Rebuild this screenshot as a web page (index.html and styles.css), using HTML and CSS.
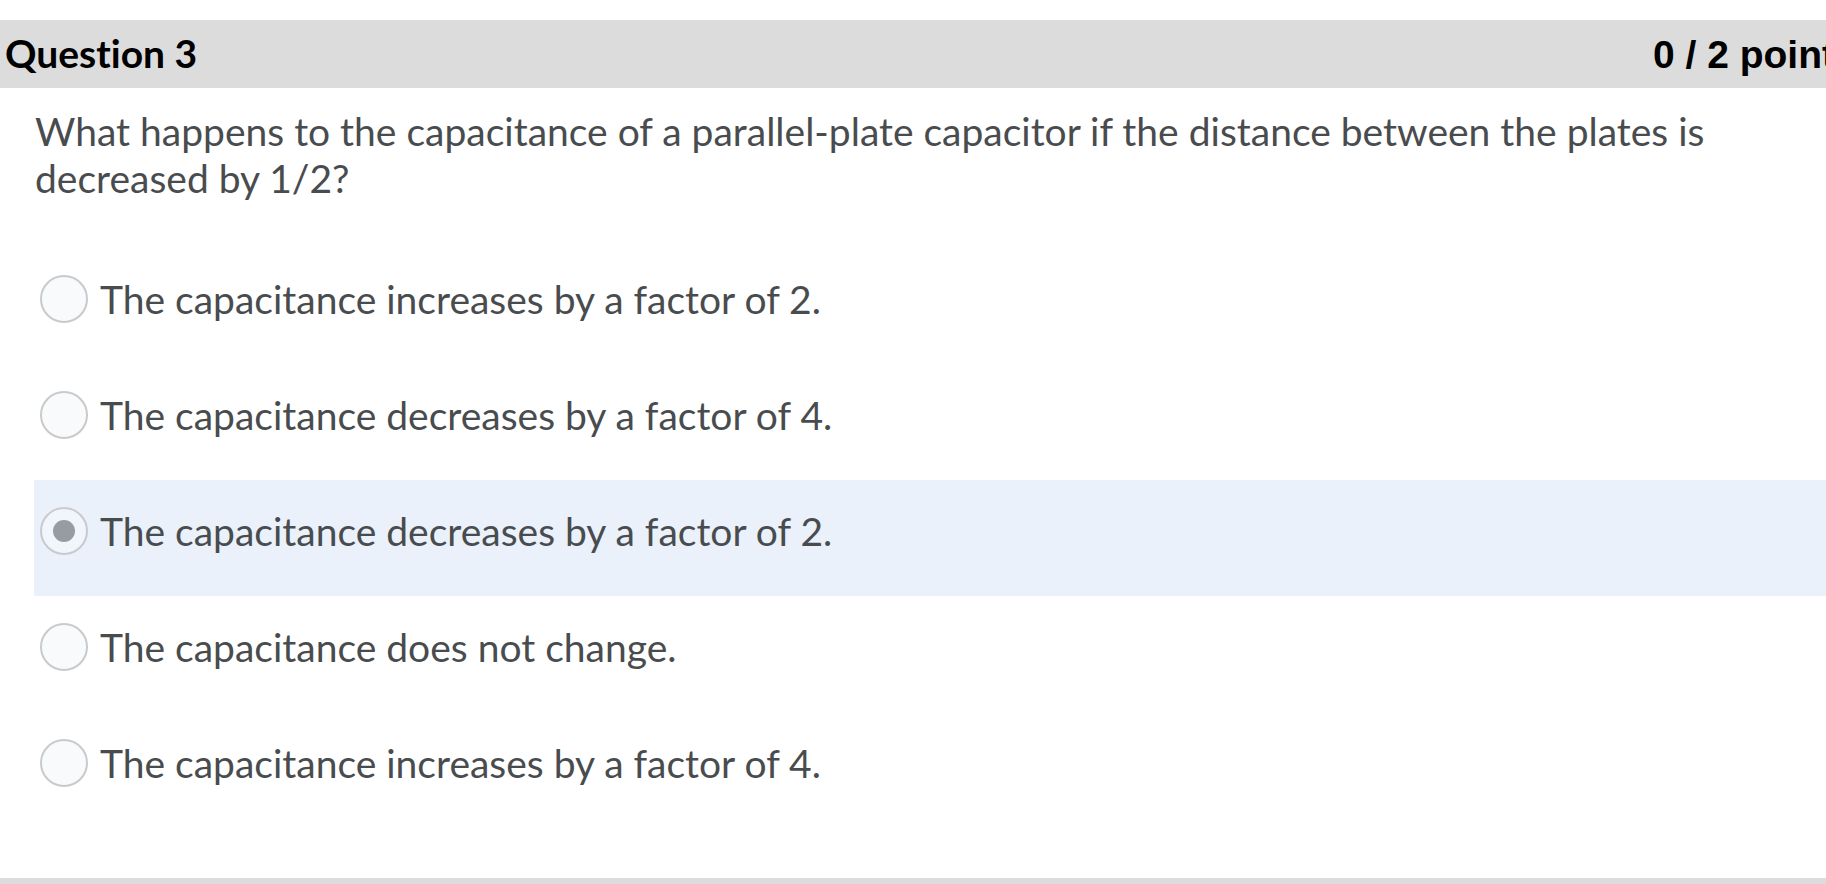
FILE: index.html
```html
<!DOCTYPE html>
<html lang="en">
<head>
<meta charset="utf-8">
<title>Question 3</title>
<link rel="stylesheet" href="styles.css">
</head>
<body>
<div class="page">
  <div class="q-header">
    <h2 class="q-title">Question 3</h2>
    <span class="q-points">0 / 2 points</span>
  </div>
  <div class="q-body">
    <p class="q-text">What happens to the capacitance of a parallel-plate capacitor if the distance between the plates is decreased by 1/2?</p>
    <div class="options">
      <label class="option"><span class="radio"></span><span class="option-text">The capacitance increases by a factor of 2.</span></label>
      <label class="option"><span class="radio"></span><span class="option-text">The capacitance decreases by a factor of 4.</span></label>
      <label class="option selected"><span class="radio checked"></span><span class="option-text">The capacitance decreases by a factor of 2.</span></label>
      <label class="option"><span class="radio"></span><span class="option-text">The capacitance does not change.</span></label>
      <label class="option"><span class="radio"></span><span class="option-text">The capacitance increases by a factor of 4.</span></label>
    </div>
  </div>
  <div class="next-bar"></div>
</div>
</body>
</html>
```
FILE: styles.css
```css
html, body {
  margin: 0;
  padding: 0;
  background: #ffffff;
  overflow: hidden;
}

.page {
  width: 1826px;
  height: 884px;
  overflow: hidden;
  padding-top: 20px;
  box-sizing: border-box;
  font-family: Lato, "Open Sans", sans-serif;
  font-variant-ligatures: none;
  color: #494c4e;
}

.q-header {
  height: 68px;
  background: #dcdcdc;
  display: grid;
  grid-template-columns: 1648px max-content;
  align-items: center;
  padding-left: 5px;
}

.q-title {
  margin: 0;
  font-family: Lato, sans-serif;
  font-weight: 700;
  font-size: 39px;
  color: #000000;
  line-height: 1;
  padding-bottom: 2px;
}

.q-points {
  font-family: "Liberation Sans", Arial, sans-serif;
  font-weight: 700;
  font-size: 39px;
  color: #000000;
  white-space: nowrap;
  line-height: 1;
}

.q-body {
  padding-left: 34px;
}

.q-text {
  margin: 20px 0 0 0;
  padding-left: 1px;
  padding-right: 100px;
  font-size: 39px;
  line-height: 47px;
}

.options {
  margin-top: 46px;
  display: flex;
  flex-direction: column;
}

.option {
  display: flex;
  align-items: center;
  height: 116px;
  box-sizing: border-box;
  padding: 28px 6px 42px 6px;
  gap: 12px;
}

.option.selected {
  background: #eaf1fb;
}

.radio {
  width: 48px;
  height: 48px;
  box-sizing: border-box;
  border-radius: 50%;
  border: 2px solid #c8cacc;
  background: #f9fafc;
  display: flex;
  align-items: center;
  justify-content: center;
  flex: none;
}

.radio.checked {
  background: #f1f5fc;
}

.radio.checked::after {
  content: "";
  width: 22px;
  height: 22px;
  border-radius: 50%;
  background: #979ca4;
}

.option-text {
  font-size: 39px;
  line-height: 47px;
  white-space: nowrap;
}

.next-bar {
  margin-top: 50px;
  height: 20px;
  background: #dcdcdc;
}
```
